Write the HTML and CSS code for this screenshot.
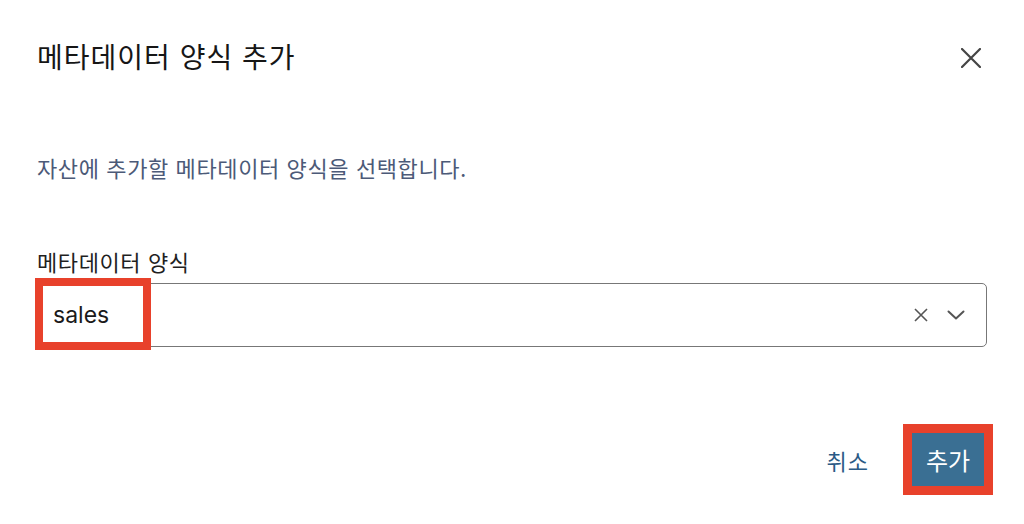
FILE: index.html
```html
<!DOCTYPE html>
<html lang="ko">
<head>
  <meta charset="UTF-8">
  <meta name="viewport" content="width=device-width, initial-scale=1.0">
  <title>메타데이터 양식 추가</title>
  <link rel="stylesheet" href="styles.css">
</head>
<body>
  <div class="dialog">
    <div class="dialog-header">
      <h1 class="dialog-title">메타데이터 양식 추가</h1>
      <button class="close-btn" aria-label="닫기">
        <svg width="20" height="20" viewBox="0 0 20 20">
          <path d="M1 1 L19 19 M19 1 L1 19" stroke="#444" stroke-width="2.2" stroke-linecap="round" fill="none"/>
        </svg>
      </button>
    </div>

    <p class="dialog-desc">자산에 추가할 메타데이터 양식을 선택합니다.</p>

    <div class="field">
      <label class="field-label">메타데이터 양식</label>
      <div class="select-box">
        <span class="select-value">sales</span>
        <span class="highlight"></span>
        <div class="select-icons">
          <svg width="14" height="14" viewBox="0 0 14 14">
            <path d="M1 1 L13 13 M13 1 L1 13" stroke="#555" stroke-width="1.6" fill="none"/>
          </svg>
          <svg width="18" height="10" viewBox="0 0 18 10">
            <path d="M1.5 1.5 L9 8.5 L16.5 1.5" stroke="#555" stroke-width="2" stroke-linecap="round" stroke-linejoin="round" fill="none"/>
          </svg>
        </div>
      </div>
    </div>

    <div class="dialog-footer">
      <button class="btn-link">취소</button>
      <span class="btn-frame">
        <button class="btn-primary">추가</button>
      </span>
    </div>
  </div>
</body>
</html>
```

FILE: styles.css
```css
* {
  margin: 0;
  padding: 0;
  box-sizing: border-box;
}

body {
  background: #fff;
  font-family: Inter, "Noto Sans CJK KR", sans-serif;
  color: #1b1b1b;
}

.dialog {
  padding: 38px 37px 0 37px;
}

.dialog-header {
  display: flex;
  justify-content: space-between;
  align-items: center;
  height: 40px;
}

.dialog-title {
  font-size: 28px;
  font-weight: 400;
  line-height: 40px;
  letter-spacing: 1px;
  color: #161616;
}

.close-btn {
  background: none;
  border: none;
  width: 20px;
  height: 20px;
  margin-right: 6px;
  display: flex;
  cursor: pointer;
}

.dialog-desc {
  margin-top: 77px;
  font-size: 22px;
  line-height: 28px;
  letter-spacing: 0.6px;
  color: #4c5a78;
}

.field {
  margin-top: 66px;
}

.field-label {
  display: block;
  font-size: 22px;
  line-height: 28px;
  letter-spacing: 0.6px;
  color: #1f1f1f;
}

.select-box {
  position: relative;
  margin-top: 6px;
  height: 64px;
  border: 1px solid #777;
  border-radius: 5px;
  display: flex;
  align-items: center;
  justify-content: space-between;
  padding: 0 21px 0 15px;
}

.select-value {
  font-size: 23px;
  color: #1a1a1a;
}

.highlight {
  position: absolute;
  left: -3px;
  top: -6px;
  width: 116px;
  height: 72px;
  border: 8px solid #e8412b;
}

.select-icons {
  display: flex;
  align-items: center;
  gap: 19px;
}

.dialog-footer {
  margin-top: 77px;
  margin-right: -6px;
  display: flex;
  justify-content: flex-end;
  align-items: center;
  gap: 34px;
}

.btn-link {
  background: none;
  border: none;
  font-family: inherit;
  font-size: 22px;
  letter-spacing: 1px;
  color: #2b5a85;
  cursor: pointer;
}

.btn-frame {
  display: flex;
  border: 9px solid #e8412b;
}

.btn-primary {
  width: 72px;
  height: 53px;
  background: #3a6f93;
  border: none;
  font-family: inherit;
  font-size: 24px;
  color: #fff;
  cursor: pointer;
}
```
